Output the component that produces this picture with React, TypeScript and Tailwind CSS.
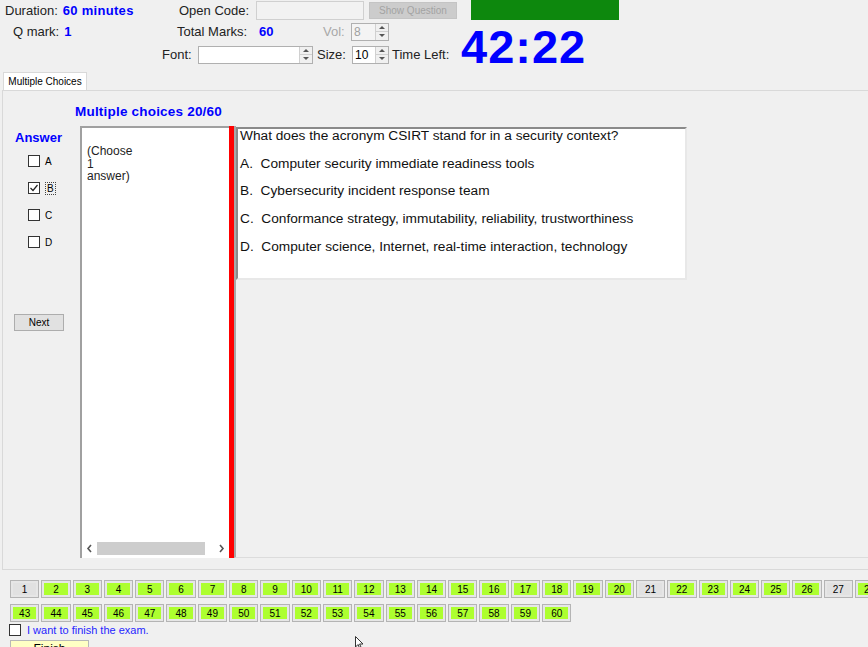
import React from "react"

const row1 = Array.from({ length: 28 }, (_, i) => i + 1)
const row2 = Array.from({ length: 18 }, (_, i) => i + 43)
const grayNums = [1, 21, 27]

function Spin({ value, disabled, w }: { value: string; disabled?: boolean; w: string }) {
  return (
    <div className={`${w} h-[18px] flex border border-[#b0b0b0] bg-white`}>
      <div className={`flex-1 pl-[2px] text-[12px] leading-[16px] ${disabled ? "text-[#a0a0a0] bg-[#f4f4f4]" : "text-black"}`}>
        {value}
      </div>
      <div className="w-[13px] flex flex-col border-l border-[#d0d0d0] bg-[#f0f0f0]">
        <div className="flex-1 flex items-center justify-center border-b border-[#d0d0d0]">
          <div className="w-0 h-0 border-l-[3px] border-r-[3px] border-b-[3px] border-l-transparent border-r-transparent border-b-[#555]" />
        </div>
        <div className="flex-1 flex items-center justify-center">
          <div className="w-0 h-0 border-l-[3px] border-r-[3px] border-t-[3px] border-l-transparent border-r-transparent border-t-[#555]" />
        </div>
      </div>
    </div>
  )
}

function Check({ checked }: { checked?: boolean }) {
  return (
    <div className="w-[12px] h-[12px] border border-[#333] bg-white flex items-center justify-center">
      {checked && (
        <svg width="10" height="10" viewBox="0 0 10 10">
          <path d="M1.5 5 L4 7.5 L8.5 2" fill="none" stroke="#222" strokeWidth="1.2" />
        </svg>
      )}
    </div>
  )
}

function NumBtn({ n }: { n: number }) {
  const gray = grayNums.includes(n)
  return (
    <div className="w-[29.3px] h-[18px] shrink-0 border border-[#b4b4b4] bg-[#e6e6e6] p-[2px]">
      <div
        className={`h-full flex items-center justify-center text-[10px] text-black ${
          gray ? "bg-[#e1e1e1]" : "bg-[#adff2f]"
        }`}
      >
        {n}
      </div>
    </div>
  )
}

export default function App() {
  return (
    <div className="relative w-[868px] h-[647px] overflow-hidden bg-[#f0f0f0] font-['Liberation_Sans',Arial,sans-serif] text-[13px] text-[#222]">
      {/* header */}
      <div className="h-[70px] flex flex-col">
        <div className="flex items-start h-[22px]">
          <div className="w-[179px] pl-[5px] h-[21px] flex items-center">
            <span>Duration:</span>
            <span className="ml-[5px] font-bold text-[#0000ff] tracking-[0.3px]">60 minutes</span>
          </div>
          <div className="w-[77px] h-[21px] flex items-center">Open Code:</div>
          <div className="mt-[1px] w-[108px] h-[19px] border border-[#d0d0d0] bg-[#f2f2f2]" />
          <div className="mt-[2px] ml-[5px] w-[88px] h-[17px] bg-[#cccccc] border border-[#c4c4c4] flex items-center justify-center text-[10px] text-[#a3a3a3]">
            Show Question
          </div>
          <div className="ml-[14px] w-[148px] h-[20px] bg-[#0d880d]" />
        </div>
        <div className="flex">
          <div className="w-[461px] flex flex-col">
            <div className="flex items-center h-[21px]">
              <div className="w-[177px] pl-[13px] flex items-center">
                <span>Q mark:</span>
                <span className="ml-[5px] font-bold text-[#0000ff]">1</span>
              </div>
              <div className="w-[82px]">Total Marks:</div>
              <div className="w-[64px] font-bold text-[#0000ff]">60</div>
              <div className="w-[28px] text-[#a8a8a8]">Vol:</div>
              <Spin value="8" disabled w="w-[38px]" />
            </div>
            <div className="flex items-center h-[23px] mt-[1px]">
              <div className="pl-[162px] w-[198px]">Font:</div>
              <Spin value="" w="w-[115px]" />
              <div className="ml-[4px] w-[35px]">Size:</div>
              <Spin value="10" w="w-[37px]" />
              <div className="ml-[3px]">Time Left:</div>
            </div>
          </div>
          <div className="mt-[2px] text-[47px] leading-[48px] font-bold text-[#0000ff] tracking-[1px]">42:22</div>
        </div>
      </div>

      {/* tab */}
      <div className="mt-[2px] flex pl-[3px]">
        <div className="w-[84px] h-[18px] bg-white border border-b-0 border-[#d9d9d9] flex items-center justify-center text-[10px] text-black">
          Multiple Choices
        </div>
      </div>
      <div className="ml-[2px] h-[480px] border border-r-0 border-[#d9d9d9] bg-[#f0f0f0] flex flex-col">
        <div className="h-[35px] pl-[72px] pt-[13px] text-[13.5px] font-bold text-[#0000ff] leading-[16px] tracking-[0.2px]">
          Multiple choices 20/60
        </div>
        <div className="flex h-[432px]">
          {/* answer column */}
          <div className="w-[77px] flex flex-col">
            <div className="pl-[12px] mt-[4px] text-[13px] font-bold text-[#0000ff] leading-[16px]">Answer</div>
            <div className="flex flex-col gap-[15px] mt-[9px] pl-[25px]">
              {["A", "B", "C", "D"].map((l) => (
                <div key={l} className="flex items-center h-[12px]">
                  <Check checked={l === "B"} />
                  <span
                    className={`ml-[5px] text-[10px] leading-[11px] text-black ${
                      l === "B" ? "border border-dotted border-[#444] px-[1px]" : ""
                    }`}
                  >
                    {l}
                  </span>
                </div>
              ))}
            </div>
            <div className="mt-[66px] ml-[11px] w-[50px] h-[17px] border border-[#adadad] bg-[#e1e1e1] flex items-center justify-center text-[10px] text-black">
              Next
            </div>
          </div>
          {/* info textbox */}
          <div className="w-[149px] h-[432px] border-t-2 border-l-2 border-[#a0a0a0] bg-white flex flex-col">
            <div className="flex-1 pl-[5px] pt-[17px] text-[12px] leading-[12.5px] text-[#222]">
              (Choose
              <br />1<br />
              answer)
            </div>
            <div className="h-[15px] mb-[2px] flex items-center bg-white">
              <div className="w-[15px] flex justify-center">
                <svg width="7" height="9" viewBox="0 0 7 9">
                  <path d="M5 1 L2 4.5 L5 8" fill="none" stroke="#555" strokeWidth="1.6" />
                </svg>
              </div>
              <div className="w-[108px] h-[13px] bg-[#cdcdcd]" />
              <div className="flex-1" />
              <div className="w-[15px] flex justify-center">
                <svg width="7" height="9" viewBox="0 0 7 9">
                  <path d="M2 1 L5 4.5 L2 8" fill="none" stroke="#555" strokeWidth="1.6" />
                </svg>
              </div>
            </div>
          </div>
          <div className="w-[5px] bg-[#ff0000]" />
          {/* question area */}
          <div className="flex-1 border-l-2 border-[#a8a8a8] border-b border-b-[#dcdcdc]">
            <div className="mt-[1px] w-[451px] h-[153px] border-t-2 border-l-2 border-t-[#8a8a8a] border-l-[#8a8a8a] border-r-2 border-b-2 border-r-[#e8e8e8] border-b-[#e8e8e8] bg-white pl-[2px] text-[13.7px] leading-[16px] text-[#111]">
              <div className="-mt-[1px]">What does the acronym CSIRT stand for in a security context?</div>
              <div className="mt-[11.7px]">A.&nbsp; Computer security immediate readiness tools</div>
              <div className="mt-[11.7px]">B.&nbsp; Cybersecurity incident response team</div>
              <div className="mt-[11.7px]">C.&nbsp; Conformance strategy, immutability, reliability, trustworthiness</div>
              <div className="mt-[11.7px]">D.&nbsp; Computer science, Internet, real-time interaction, technology</div>
            </div>
          </div>
        </div>
      </div>

      {/* question navigation */}
      <div className="mt-[10px] pl-[10px] flex gap-[2px] overflow-hidden">
        {row1.map((n) => (
          <NumBtn key={n} n={n} />
        ))}
      </div>
      <div className="mt-[6px] pl-[10px] flex gap-[2px]">
        {row2.map((n) => (
          <NumBtn key={n} n={n} />
        ))}
      </div>
      <div className="mt-[2px] pl-[9px] flex items-center h-[12px]">
        <Check />
        <span className="ml-[6px] text-[11px] text-[#2626ff]">I want to finish the exam.</span>
      </div>
      <div className="mt-[4px] ml-[10px] w-[79px] h-[20px] border border-[#b8b8b8] bg-[#ffffc4] flex justify-center text-[12px] leading-[14px] pt-[1px] text-black">
        Finish
      </div>

      {/* mouse pointer */}
      <svg className="absolute left-[355px] top-[636px]" width="10" height="14" viewBox="0 0 10 14">
        <path d="M0.5 0.5 L0.5 11 L3 8.5 L5 13 L6.5 12.3 L4.6 8 L8 8 Z" fill="white" stroke="#333" strokeWidth="1" />
      </svg>
    </div>
  )
}
